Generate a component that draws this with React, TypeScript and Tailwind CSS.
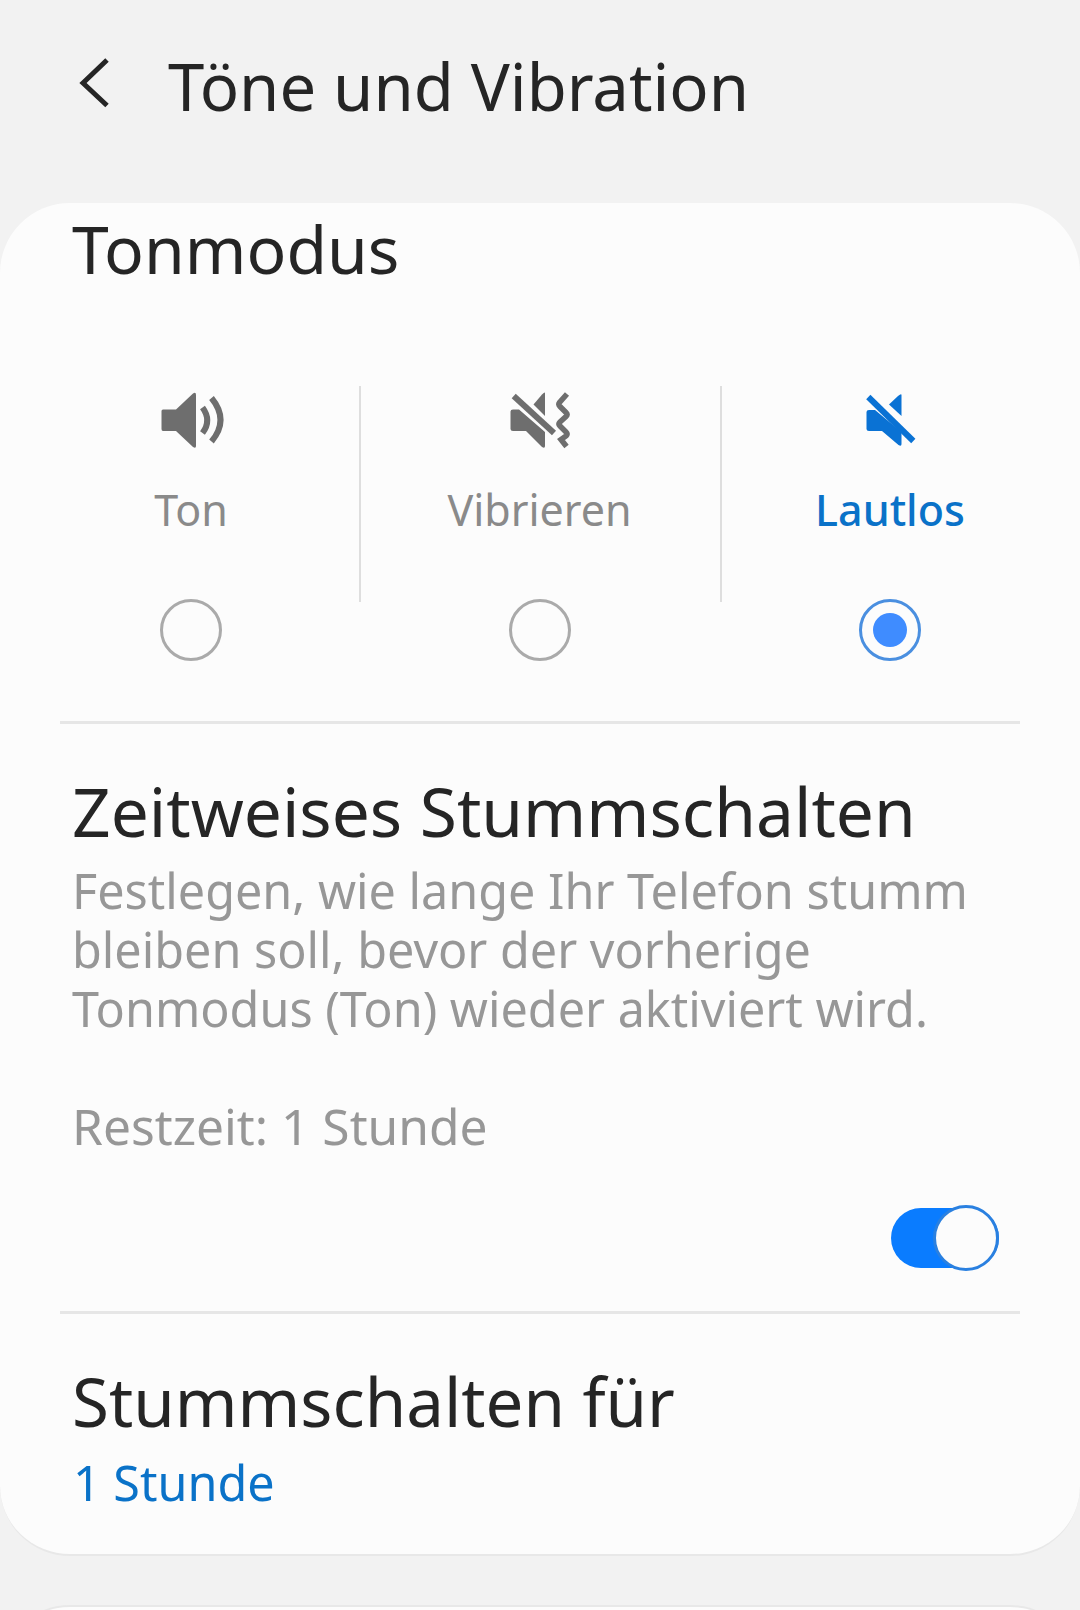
function SoundIcon() {
  return (
    <svg width="120" height="76" viewBox="0 15 120 76" fill="none">
      <path d="M32 38.5H45L62 22.5Q65 20.5 65 24V75Q65 78 62 76L45 60H32Q30.5 60 30.5 58V40Q30.5 38.5 32 38.5Z" fill="#6e6e6e" />
      <path d="M71.5 36.5Q81 49.5 71.5 62" stroke="#6e6e6e" strokeWidth="6" />
      <path d="M80.5 27Q98.5 49 80.5 70.5" stroke="#6e6e6e" strokeWidth="6" />
    </svg>
  );
}

function VibrateIcon() {
  return (
    <svg width="120" height="76" viewBox="0 15 120 76" fill="none">
      <g fill="#6e6e6e">
        <path d="M65 22V45L53.5 33.5L62 23.5Q65 20.5 65 22Z" />
        <path d="M33 38.5H39L65 61V75Q65 78 62 76L46 60H33Q30.5 60 30.5 58V40.5Q30.5 38.5 33 38.5Z" />
      </g>
      <path d="M33.7 25L74 62" stroke="#6e6e6e" strokeWidth="6" />
      <path d="M87 23L79.5 31.5Q78 33.5 80 35.5L86 41.5Q88 43.5 86 45.5L80 51Q78 53 80 55L86 61Q88 63 86 65L81 68.5L86.5 75.5" stroke="#6e6e6e" strokeWidth="5.5" />
    </svg>
  );
}

function SilentIcon() {
  return (
    <svg width="120" height="76" viewBox="0 15 120 76" fill="none">
      <g fill="#0a72d4">
        <path d="M71.5 24V45L59 33.5L68 25Q71.5 22 71.5 24Z" />
        <path d="M39 39H45L71.5 61V73Q71.5 76 68.5 74L52 60H39Q36.5 60 36.5 58V41Q36.5 39 39 39Z" />
      </g>
      <path d="M38.3 26L83.3 70" stroke="#0a72d4" strokeWidth="6" />
    </svg>
  );
}

function ModeOption({ label, active, width, children }: { label: string; active?: boolean; width: string; children: React.ReactNode }) {
  return (
    <div className={`flex flex-col items-center ${width}`}>
      {children}
      <p className={`mt-[18px] text-[43px] leading-[60px] ${active ? "font-medium text-[#0a72c8]" : "text-[#8a8a8a]"}`}>{label}</p>
      <div className={`mt-[59px] flex size-[62px] items-center justify-center rounded-full border-[3px] ${active ? "border-[#4a8fe0]" : "border-[#aaaaaa]"}`}>
        {active && <div className="size-[34px] rounded-full bg-[#3f8cff]" />}
      </div>
    </div>
  );
}

export default function App() {
  return (
    <div className="h-[1610px] w-[1080px] overflow-hidden bg-[#f2f2f2] font-['Noto_Sans',sans-serif] text-[#252525]">
      <header className="flex h-[203px] items-start pt-[44px]">
        <svg className="ml-[78px] mt-[14px]" width="34" height="50" viewBox="0 0 34 50" fill="none">
          <path d="M29 2L5 25L29 47.5" stroke="#252525" strokeWidth="5" />
        </svg>
        <h1 className="ml-[56px] text-[65.2px] leading-[84px]">Töne und Vibration</h1>
      </header>

      <main className="h-[1353px] rounded-[70px] border-b-2 border-[#e8e8e8] bg-[#fcfcfc]">
        <h2 className="h-[96px] pl-[72px] pt-[3px] text-[66px] leading-[84px]">Tonmodus</h2>

        <div className="ml-[20px] mt-[87px] flex">
          <ModeOption label="Ton" width="w-[339px] pl-[3px]"><SoundIcon /></ModeOption>
          <div className="h-[216px] w-[2px] bg-[#dedede]" />
          <ModeOption label="Vibrieren" width="w-[359px] pr-[2px]"><VibrateIcon /></ModeOption>
          <div className="h-[216px] w-[2px] bg-[#dedede]" />
          <ModeOption label="Lautlos" active width="w-[336px]"><SilentIcon /></ModeOption>
        </div>

        <div className="mx-[60px] mt-[60px] h-[3px] bg-[#e6e6e6]" />

        <section className="px-[72px] pt-[45px]">
          <h2 className="text-[67.6px] leading-[84px]">Zeitweises Stummschalten</h2>
          <p className="mt-[8px] text-[48.5px] leading-[59px] text-[#979797]">
            Festlegen, wie lange Ihr Telefon stumm
            <br />
            bleiben soll, bevor der vorherige
            <br />
            Tonmodus (Ton) wieder aktiviert wird.
          </p>
          <p className="mt-[58px] text-[49.7px] leading-[60px] text-[#979797]">Restzeit: 1 Stunde</p>
        </section>

        <div className="mr-[81px] mt-[52px] flex justify-end">
          <div className="flex h-[60px] w-[108px] items-center justify-end rounded-full bg-[#0a7cff]">
            <div className="size-[66px] shrink-0 rounded-full border-[3px] border-[#2a80e0] bg-[#fcfcfc]" />
          </div>
        </div>

        <div className="mx-[60px] mt-[43px] h-[3px] bg-[#e6e6e6]" />

        <section className="px-[72px] pt-[45px]">
          <h2 className="text-[67.2px] leading-[84px]">Stummschalten für</h2>
          <p className="mt-[9px] pl-[1px] text-[48.5px] leading-[60px] text-[#0a72c8]">1 Stunde</p>
        </section>
      </main>

      <div className="mt-[49px] h-[100px] rounded-t-[70px] border-t-2 border-[#e8e8e8] bg-[#fcfcfc]" />
    </div>
  );
}
